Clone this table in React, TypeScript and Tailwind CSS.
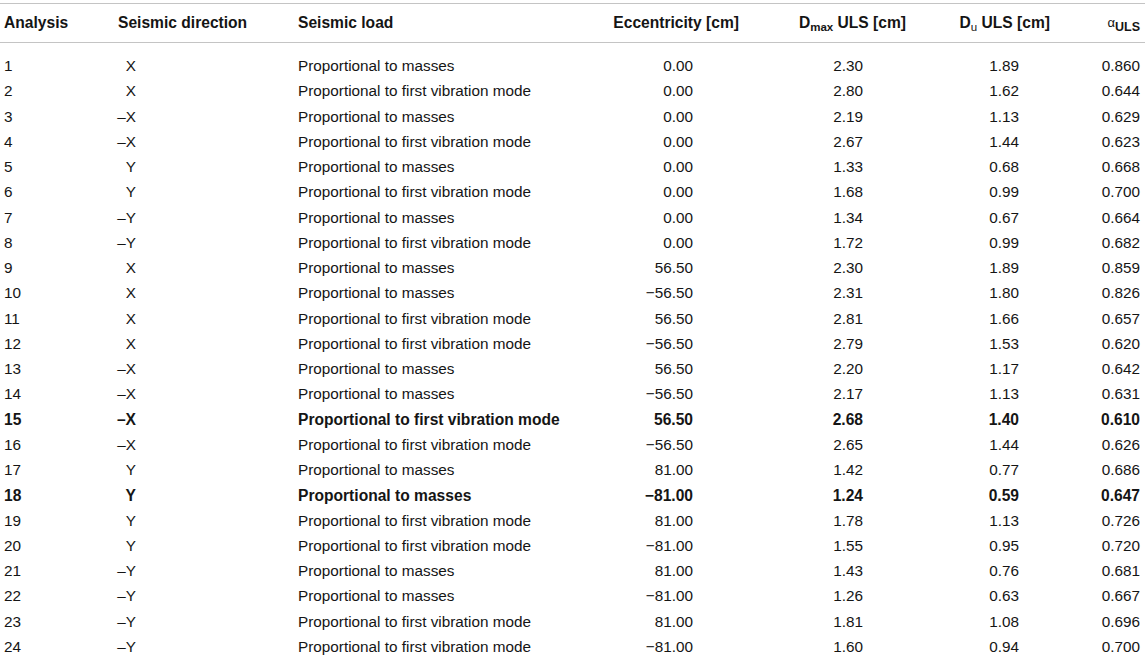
import React from "react";

const M = "Proportional to masses";
const F = "Proportional to first vibration mode";

const rows: [string, string, string, string, string, string, string, boolean?][] = [
  ["1", "X", M, "0.00", "2.30", "1.89", "0.860"],
  ["2", "X", F, "0.00", "2.80", "1.62", "0.644"],
  ["3", "–X", M, "0.00", "2.19", "1.13", "0.629"],
  ["4", "–X", F, "0.00", "2.67", "1.44", "0.623"],
  ["5", "Y", M, "0.00", "1.33", "0.68", "0.668"],
  ["6", "Y", F, "0.00", "1.68", "0.99", "0.700"],
  ["7", "–Y", M, "0.00", "1.34", "0.67", "0.664"],
  ["8", "–Y", F, "0.00", "1.72", "0.99", "0.682"],
  ["9", "X", M, "56.50", "2.30", "1.89", "0.859"],
  ["10", "X", M, "−56.50", "2.31", "1.80", "0.826"],
  ["11", "X", F, "56.50", "2.81", "1.66", "0.657"],
  ["12", "X", F, "−56.50", "2.79", "1.53", "0.620"],
  ["13", "–X", M, "56.50", "2.20", "1.17", "0.642"],
  ["14", "–X", M, "−56.50", "2.17", "1.13", "0.631"],
  ["15", "–X", F, "56.50", "2.68", "1.40", "0.610", true],
  ["16", "–X", F, "−56.50", "2.65", "1.44", "0.626"],
  ["17", "Y", M, "81.00", "1.42", "0.77", "0.686"],
  ["18", "Y", M, "−81.00", "1.24", "0.59", "0.647", true],
  ["19", "Y", F, "81.00", "1.78", "1.13", "0.726"],
  ["20", "Y", F, "−81.00", "1.55", "0.95", "0.720"],
  ["21", "–Y", M, "81.00", "1.43", "0.76", "0.681"],
  ["22", "–Y", M, "−81.00", "1.26", "0.63", "0.667"],
  ["23", "–Y", F, "81.00", "1.81", "1.08", "0.696"],
  ["24", "–Y", F, "−81.00", "1.60", "0.94", "0.700"],
];

export default function App() {
  return (
    <div
      className="w-[1145px] h-[660px] bg-white text-[#151515] text-[15.3px] overflow-hidden"
      style={{ fontFamily: '"Liberation Sans", Arial, sans-serif' }}
    >
      <div className="mt-[3px] border-t border-b border-[#c4c4c4]">
        <div className="flex h-[38px] items-center font-bold text-[15.6px] whitespace-nowrap">
          <div className="w-[118px] pl-[4px]">Analysis</div>
          <div className="w-[180px]">Seismic direction</div>
          <div className="w-[270px]">Seismic load</div>
          <div className="w-[171px] text-right">Eccentricity [cm]</div>
          <div className="w-[167px] text-right">
            D<span className="text-[11.5px] relative top-[3px]">max</span> ULS [cm]
          </div>
          <div className="w-[144px] text-right">
            D<span className="text-[11.5px] font-normal relative top-[3px]">u</span> ULS [cm]
          </div>
          <div className="w-[90px] text-right">
            <span className="text-[13px] font-normal relative top-[-1px]">α</span>
            <span className="text-[12.5px] relative top-[3px]">ULS</span>
          </div>
        </div>
      </div>
      <div className="pt-[11px]">
        {rows.map((r) => (
          <div
            key={r[0]}
            className={`flex h-[25.25px] items-center whitespace-nowrap ${r[7] ? "font-bold text-[15.6px]" : ""}`}
          >
            <div className="w-[118px] pl-[4px]">{r[0]}</div>
            <div className="w-[180px]">
              <span className="inline-block w-[21px] -ml-[3px] text-right">{r[1]}</span>
            </div>
            <div className="w-[270px]">{r[2]}</div>
            <div className="w-[171px] text-right pr-[46px]">{r[3]}</div>
            <div className="w-[167px] text-right pr-[43px]">{r[4]}</div>
            <div className="w-[144px] text-right pr-[31px]">{r[5]}</div>
            <div className="w-[90px] text-right">{r[6]}</div>
          </div>
        ))}
      </div>
    </div>
  );
}
